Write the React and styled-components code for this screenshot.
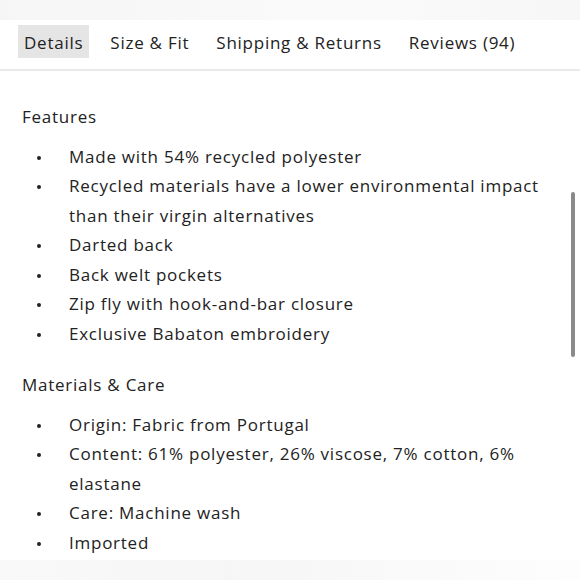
import React from "react";
import styled, { createGlobalStyle } from "styled-components";

const GlobalStyle = createGlobalStyle`
  html, body {
    margin: 0;
    padding: 0;
    background: #fff;
  }
  body {
    font-family: "Open Sans", "Liberation Sans", sans-serif;
    color: #222;
  }
`;

const Page = styled.div`
  position: relative;
  width: 580px;
  height: 580px;
  overflow: hidden;
  display: flex;
  flex-direction: column;
  background: #fff;
`;

const TopStrip = styled.div`
  flex-shrink: 0;
  height: 20px;
  background: linear-gradient(90deg, #f6f6f6, #fafafa 60%, #f7f7f7);
`;

const TabBar = styled.div`
  flex-shrink: 0;
  display: flex;
  align-items: flex-start;
  gap: 15px;
  height: 44px;
  padding: 5px 0 0 18px;
  border-bottom: 2px solid #e9e9e9;
`;

const Tab = styled.div`
  height: 33px;
  line-height: 35px;
  padding: 0 6px;
  font-size: 17px;
  letter-spacing: 0.75px;
  color: #222;
  background: ${(p) => (p.active ? "#e5e5e5" : "transparent")};
`;

const Content = styled.div`
  flex: 1;
  min-height: 0;
  overflow: hidden;
  padding: 31px 0 0 22px;
`;

const Heading = styled.div`
  font-size: 17px;
  letter-spacing: 0.75px;
  line-height: 29.5px;
  margin-bottom: 10px;
`;

const List = styled.ul`
  list-style: none;
  margin: 0 0 22px;
  padding: 0;
`;

const Item = styled.li`
  position: relative;
  padding-left: 47px;
  padding-right: 18px;
  font-size: 17px;
  letter-spacing: 0.75px;
  line-height: 29.5px;
  &::before {
    content: "";
    position: absolute;
    left: 15px;
    top: 14px;
    width: 4px;
    height: 4px;
    border-radius: 50%;
    background: #222;
  }
`;

const Scrollbar = styled.div`
  position: absolute;
  right: 5px;
  top: 192px;
  width: 4px;
  height: 165px;
  border-radius: 2px;
  background: #8a8a8a;
`;

const BottomStrip = styled.div`
  flex-shrink: 0;
  height: 20px;
  background: linear-gradient(90deg, #f9f9f9, #f6f6f6 40%, #fdfdfd);
`;

const tabs = ["Details", "Size & Fit", "Shipping & Returns", "Reviews (94)"];

const sections = [
  {
    title: "Features",
    items: [
      "Made with 54% recycled polyester",
      "Recycled materials have a lower environmental impact than their virgin alternatives",
      "Darted back",
      "Back welt pockets",
      "Zip fly with hook-and-bar closure",
      "Exclusive Babaton embroidery",
    ],
  },
  {
    title: "Materials & Care",
    items: [
      "Origin: Fabric from Portugal",
      "Content: 61% polyester, 26% viscose, 7% cotton, 6% elastane",
      "Care: Machine wash",
      "Imported",
    ],
  },
];

const App = () => {
  return (
    <Page>
      <GlobalStyle />
      <TopStrip />
      <TabBar>
        {tabs.map((t, i) => (
          <Tab key={t} active={i === 0}>
            {t}
          </Tab>
        ))}
      </TabBar>
      <Content>
        {sections.map((s) => (
          <div key={s.title}>
            <Heading>{s.title}</Heading>
            <List>
              {s.items.map((item) => (
                <Item key={item}>{item}</Item>
              ))}
            </List>
          </div>
        ))}
      </Content>
      <BottomStrip />
      <Scrollbar />
    </Page>
  );
};

export default App;
